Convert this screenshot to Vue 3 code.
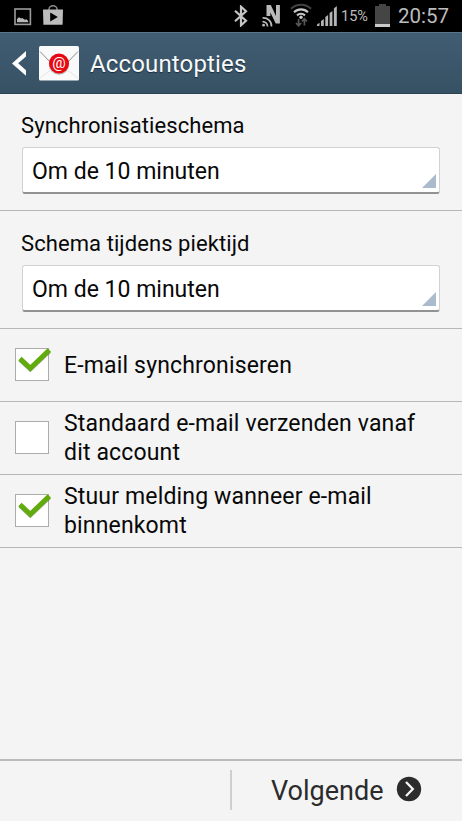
<script setup>
import { reactive } from 'vue'

const schedules = [
  { id: 'sync', label: 'Synchronisatieschema', value: 'Om de 10 minuten' },
  { id: 'peak', label: 'Schema tijdens piektijd', value: 'Om de 10 minuten' },
]

const options = reactive([
  { id: 'mail', lines: ['E-mail synchroniseren'], checked: true },
  { id: 'default', lines: ['Standaard e-mail verzenden vanaf', 'dit account'], checked: false },
  { id: 'notify', lines: ['Stuur melding wanneer e-mail', 'binnenkomt'], checked: true },
])
</script>

<template>
  <div class="screen">
    <div class="status">
      <svg class="ic-image" width="18" height="18" viewBox="0 0 18 18">
        <rect x="1" y="1" width="15.4" height="15.4" fill="none" stroke="#9c9c9c" stroke-width="1.6" />
        <path d="M3 14.3V11l2-1.8 2.2 1.2 1-.4 2.8 1.7 1.5-.4 1.7 1.7v1.3z" fill="#b8b8b8" />
      </svg>
      <svg class="ic-store" width="20" height="20" viewBox="0 0 20 20">
        <path d="M6 5.5V4a4 3.3 0 0 1 8 0v1.500" fill="none" stroke="#8f8f8f" stroke-width="1.4" />
        <path d="M0 4.500h20l-.4 15.200H.4z" fill="#bcbcbc" />
        <path d="M7.200 7.500v9l7.600-4.500z" fill="#000" />
      </svg>
      <span class="grow"></span>
      <svg class="ic-bt" width="14" height="22" viewBox="0 0 14 22">
        <path d="M1 5.800l11 10L7 20.300V1.700l5 4.500L1 16.200" fill="none" stroke="#c4c4c4" stroke-width="2.200" />
      </svg>
      <svg class="ic-nfc" width="20" height="22" viewBox="0 0 20 22">
        <path d="M4.500 11V0h4.300l5.200 11V0h3.900v18.500h-4.200L8.400 7.500V11z" fill="#b9b9b9" />
        <g fill="none" stroke="#b9b9b9" stroke-width="1.700">
          <path d="M.5 13a8 8 0 0 1 9 8.500" />
          <path d="M.5 16.600a4.800 4.800 0 0 1 5 4.900" />
        </g>
        <circle cx="1.600" cy="20.200" r="1.400" fill="#b9b9b9" />
      </svg>
      <svg class="ic-wifi" width="22" height="24" viewBox="0 0 22 24">
        <g fill="none" stroke-width="2.100">
          <path d="M1 5.800a14.500 14.500 0 0 1 20 0" stroke="#424242" />
          <path d="M4 9.200a10 10 0 0 1 14 0" stroke="#c8c8c8" />
          <path d="M7 12.400a6 6 0 0 1 8 0" stroke="#c8c8c8" />
        </g>
        <circle cx="11" cy="14.300" r="1.700" fill="#c8c8c8" />
        <g fill="none" stroke="#585858" stroke-width="1.700">
          <path d="M8.600 16v6.500M6 20l2.600 2.700L11.200 20" />
          <path d="M14.400 22.500V16M11.800 18.500l2.600-2.700 2.600 2.700" />
        </g>
      </svg>
      <svg class="ic-signal" width="20" height="20" viewBox="0 0 20 20">
        <g fill="#b5b5b5">
          <path d="M0 20v-1.500l2.500-1.700V20z" />
          <path d="M4 20v-5l2.800-2V20z" />
          <path d="M8.300 20v-9l2.800-2V20z" />
          <path d="M12.600 20V7l2.800-2v15z" />
          <path d="M16.900 20V2.500L19.800 0v20z" />
        </g>
      </svg>
      <span class="percent">15%</span>
      <svg class="ic-battery" width="15" height="23" viewBox="0 0 15 23">
        <path d="M4 0h7v2h4v18H0V2h4z" fill="#454545" />
        <path d="M0 20h15v3H0z" fill="#c9c9c9" />
      </svg>
      <span class="clock">20:57</span>
    </div>

    <header class="header">
      <svg class="back" width="14" height="25" viewBox="0 0 14 25">
        <path d="M14 0v5.500L6.200 12.300 14 19.200v5.500L0 12.500z" fill="#fff" />
      </svg>
      <svg class="mail" width="40" height="35" viewBox="0 0 40 35">
        <rect width="40" height="34.500" rx="1.500" fill="#fafafa" />
        <path d="M1 5.500l14 14.500h10L39 5.500" fill="none" stroke="#8b8b8b" stroke-width="1" />
        <path d="M1 32l12-9M39 32l-12-9" stroke="#e2e2e2" stroke-width=".9" />
        <circle cx="20" cy="18.500" r="10.200" fill="#9d9d9d" opacity=".7" />
        <circle cx="20" cy="17.500" r="10" fill="#e70812" />
        <text x="20" y="21.500" text-anchor="middle" class="at">@</text>
      </svg>
      <h1 class="title">Accountopties</h1>
    </header>

    <main class="content">
      <section v-for="s in schedules" :key="s.id" class="schedule" :class="s.id">
        <div class="label">{{ s.label }}</div>
        <div class="spinner">
          <span class="value">{{ s.value }}</span>
          <svg class="corner" width="14" height="14" viewBox="0 0 14 14">
            <path d="M14 0v14H0z" fill="#a9bbcd" />
          </svg>
        </div>
      </section>

      <div v-for="o in options" :key="o.id" class="option" @click="o.checked = !o.checked">
        <span class="box">
          <svg v-if="o.checked" class="tick" width="36" height="28" viewBox="0 0 36 28">
            <path d="M3 12.500L13.300 22.200 32.300 4" transform="translate(0 1)" fill="none" stroke="#4b6c2f" stroke-width="4.600" opacity=".6" />
            <path d="M3 12.500L13.300 22.200 32.300 4" fill="none" stroke="#62ab0c" stroke-width="4.800" />
          </svg>
        </span>
        <div class="text">
          <div v-for="line in o.lines" :key="line"><span>{{ line }}</span></div>
        </div>
      </div>
    </main>

    <footer class="footer">
      <div class="half"></div>
      <div class="next">
        <span class="next-label">Volgende</span>
        <svg class="next-icon" width="26" height="26" viewBox="0 0 26 26">
          <circle cx="13" cy="13" r="12.200" fill="#2c2c2c" />
          <path d="M10 6l6.800 7L10 20" fill="none" stroke="#f5f5f5" stroke-width="2.300" />
        </svg>
      </div>
    </footer>
  </div>
</template>

<style>
body {
  margin: 0;
  background: #f4f4f4;
}
</style>

<style scoped>
.screen {
  width: 462px;
  height: 821px;
  display: flex;
  flex-direction: column;
  overflow: hidden;
  background: #f4f4f4;
  color: #080808;
  font-family: Roboto, sans-serif;
}
.screen * {
  box-sizing: border-box;
}
svg {
  display: block;
  flex: none;
}
.status {
  height: 32px;
  flex: none;
  display: flex;
  align-items: flex-start;
  background: #000;
  color: #bdbdbd;
  white-space: nowrap;
}
.grow {
  flex: 1;
}
.ic-image {
  margin: 8px 0 0 14px;
}
.ic-store {
  margin: 5px 0 0 11px;
}
.ic-bt {
  margin: 5px 14px 0 0;
}
.ic-nfc {
  margin: 5px 8px 0 0;
}
.ic-wifi {
  margin: 3px 5px 0 0;
}
.ic-signal {
  margin: 6px 4px 0 0;
}
.percent {
  width: 28px;
  margin: 8px 6px 0 0;
  font-size: 14.5px;
  line-height: 18px;
}
.ic-battery {
  margin: 4px 8px 0 0;
}
.clock {
  width: 64px;
  margin-top: 4px;
  font-size: 20.500px;
  line-height: 24px;
}
.header {
  height: 62px;
  flex: none;
  display: flex;
  align-items: flex-start;
  border-top: 1px solid #59758a;
  border-bottom: 1px solid #2d4352;
  background: linear-gradient(#415d72, #375164);
}
.back {
  margin: 18px 0 0 12px;
}
.mail {
  margin: 13px 0 0 13px;
}
.at {
  font: 400 15px Roboto, sans-serif;
  fill: #fff;
}
.title {
  margin: 15px 0 0 11px;
  color: #f7f9fa;
  font-size: 24px;
  font-weight: 400;
  line-height: 32px;
  letter-spacing: 0.15px;
  text-shadow: 0 1px 1px #1d2d38;
}
.content {
  flex: 1;
}
.schedule {
  height: 117px;
  padding: 18px 22px 0;
  border-bottom: 1px solid #b7b7b7;
}
.schedule.peak {
  height: 118px;
  padding-top: 19px;
}
.label {
  margin-left: -1px;
  height: 35px;
  font-size: 22px;
  line-height: 28px;
  letter-spacing: 0.08px;
}
.spinner {
  height: 47px;
  display: flex;
  justify-content: space-between;
  align-items: flex-start;
  padding: 0 3px 0 9px;
  border: 1px solid #d2d2d2;
  border-bottom: 2px solid #929292;
  border-radius: 3px;
  background: #fff;
}
.value {
  font-size: 23px;
  line-height: 48px;
}
.corner {
  align-self: flex-end;
  margin-bottom: 4px;
}
.option {
  height: 73px;
  display: flex;
  align-items: center;
  border-bottom: 1px solid #b7b7b7;
}
.box {
  position: relative;
  width: 34px;
  height: 33px;
  margin: 0 0 1px 15px;
  border: 1px solid #acacac;
  background: #fff;
}
.tick {
  position: absolute;
  left: 1px;
  top: -3px;
}
.text {
  margin-left: 15px;
  font-size: 23px;
  line-height: 29px;
  letter-spacing: 0.16px;
  white-space: nowrap;
}
.footer {
  height: 62px;
  flex: none;
  display: flex;
  border-top: 2px solid #bcbcbc;
}
.half {
  width: 232px;
  height: 40px;
  margin-top: 9px;
  border-right: 2px solid #cfcfcf;
}
.next {
  display: flex;
  align-items: flex-start;
  padding: 14px 0 0 39px;
  color: #2b2b2b;
}
.next-label {
  width: 125px;
  font-size: 27px;
  line-height: 32px;
}
.next-icon {
  margin-top: 1px;
}
</style>
